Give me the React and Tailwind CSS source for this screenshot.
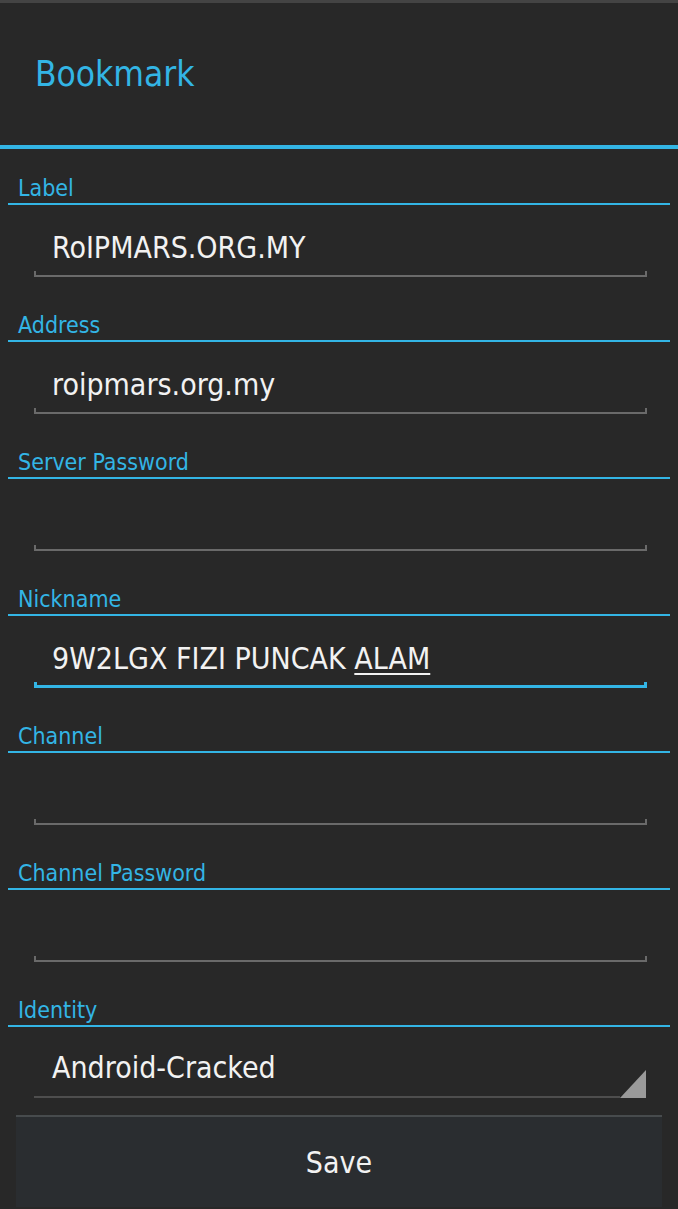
import React from 'react';

const font = { fontFamily: '"DejaVu Sans Condensed", "DejaVu Sans", sans-serif' };

const SectionHeader = ({ title }) => (
  <div className="h-[56px] mx-[8px] flex items-end border-b-2 border-[#33b5e5] px-[10px] pb-[3px]">
    <span className="text-[23px] leading-none text-[#33b5e5]">{title}</span>
  </div>
);

const Field = ({ value, focused, children }) => (
  <div className="h-[81px] pl-[34px] pr-[31px] pt-[14px]">
    <div className="h-[52px] flex items-center px-[18px] pt-[6px] text-[30px] leading-none text-[#f2f2f2]">
      {children || value}
    </div>
    <div
      className={
        focused
          ? 'h-[6px] border-x-[3px] border-b-[3px] border-[#33b5e5]'
          : 'h-[6px] border-x-2 border-b-2 border-[#6a6a6a]'
      }
    />
  </div>
);

const App = () => {
  return (
    <div className="w-[678px] h-[1209px] bg-[#282828] overflow-hidden flex flex-col" style={font}>
      <div className="h-[3px] bg-[#444444]" />
      {/* Title */}
      <div className="h-[142px] flex items-center px-[35px]">
        <h1 className="text-[35px] leading-none text-[#33b5e5]">Bookmark</h1>
      </div>
      <div className="h-[4px] bg-[#33b5e5]" />

      <SectionHeader title="Label" />
      <Field value="RoIPMARS.ORG.MY" />

      <SectionHeader title="Address" />
      <Field value="roipmars.org.my" />

      <SectionHeader title="Server Password" />
      <Field value="" />

      <SectionHeader title="Nickname" />
      <Field focused>
        <span>
          9W2LGX FIZI PUNCAK <span className="underline decoration-2 underline-offset-4">ALAM</span>
        </span>
      </Field>

      <SectionHeader title="Channel" />
      <Field value="" />

      <SectionHeader title="Channel Password" />
      <Field value="" />

      <SectionHeader title="Identity" />
      {/* Spinner */}
      <div className="h-[88px] pl-[34px] pr-[32px] pt-[13px]">
        <div className="h-[56px] flex items-center px-[18px] text-[30px] leading-none text-[#f2f2f2]">
          Android-Cracked
        </div>
        <div className="flex items-end">
          <div className="flex-1 h-[2px] bg-[#4e4e4e]" />
          <svg width="26" height="28" viewBox="0 0 26 28" className="-mt-[26px]">
            <polygon points="26,0 26,28 0,28" fill="#9a9a9a" />
          </svg>
        </div>
      </div>

      {/* Save button */}
      <div className="px-[16px]">
        <button className="w-full h-[92px] bg-[#2a2d30] border-t-2 border-[#474b4d] text-[30px] text-[#f2f2f2]" style={font}>
          Save
        </button>
      </div>
    </div>
  );
};

export default App;
